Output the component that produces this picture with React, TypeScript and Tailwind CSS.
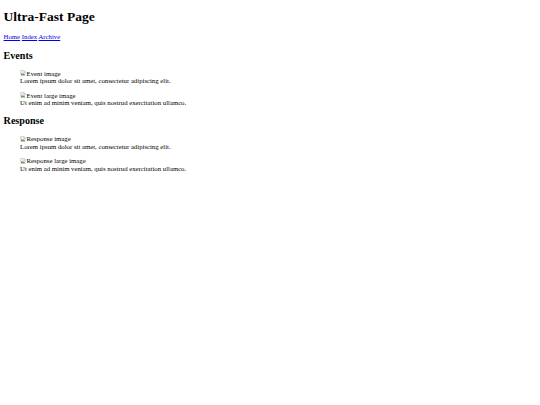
import React from 'react';

function BrokenImage({ alt }: { alt: string }) {
  return (
    <span className="inline">
      <svg width="6" height="6" viewBox="0 0 16 16" className="mr-[0.5px] inline-block align-[-0.5px]">
        <path d="M1.5 1.5h10l3 3v4l-2 1.5-2-1.5-2 1.5-2-1.5-2 1.5-3-1.5z" fill="#f4f4f4" stroke="#9a9a9a" />
        <path d="M2 11l3-3 3 3 2-2 4 4v1.5H2z" fill="#5fa35a" />
        <circle cx="11" cy="5" r="1.5" fill="#7aa7d8" />
      </svg>
      {alt}
    </span>
  );
}

function Figure({ alt, caption }: { alt: string; caption: string }) {
  return (
    <figure className="my-[7px] mx-[16.5px] leading-[7.5px]">
      <div>
        <BrokenImage alt={alt} />
      </div>
      <figcaption>{caption}</figcaption>
    </figure>
  );
}

export default function App() {
  return (
    <div className="m-[3.6px] bg-white font-['Liberation_Serif',serif] text-[6.75px] leading-[7.5px] text-black">
      <h1 className="mt-[8.5px] mb-[9.75px] text-[13.5px] font-bold leading-[15px]">Ultra-Fast Page</h1>
      <p className="my-[7px]">
        <a href="#" className="text-[#0000ee] underline">Home</a>{' '}
        <a href="#" className="text-[#0000ee] underline">Index</a>{' '}
        <a href="#" className="text-[#0000ee] underline">Archive</a>
      </p>
      <section>
        <h2 className="mt-[8.75px] mb-[8.5px] text-[10.1px] font-bold leading-[11.5px]">Events</h2>
        <Figure alt="Event image" caption="Lorem ipsum dolor sit amet, consectetur adipiscing elit." />
        <Figure alt="Event large image" caption="Ut enim ad minim veniam, quis nostrud exercitation ullamco." />
      </section>
      <section>
        <h2 className="mt-[8.75px] mb-[8.5px] text-[10.1px] font-bold leading-[11.5px]">Response</h2>
        <Figure alt="Response image" caption="Lorem ipsum dolor sit amet, consectetur adipiscing elit." />
        <Figure alt="Response large image" caption="Ut enim ad minim veniam, quis nostrud exercitation ullamco." />
      </section>
    </div>
  );
}
